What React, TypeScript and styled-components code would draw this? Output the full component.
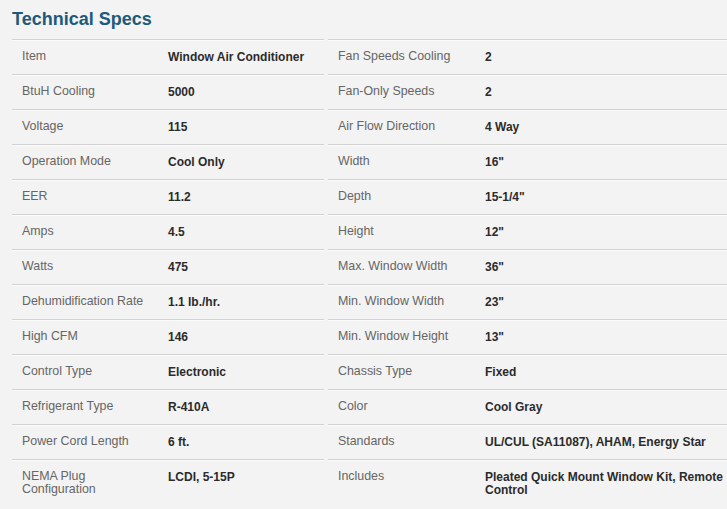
import React from "react";
import styled, { createGlobalStyle } from "styled-components";

const Global = createGlobalStyle`
  html, body { margin: 0; padding: 0; background: #f3f3f3; overflow: hidden; }
  body { font-family: "Liberation Sans", Arial, sans-serif; }
  *, *::before, *::after { box-sizing: border-box; }
`;

const Page = styled.div`
  padding: 8px 0 0 12px;
  width: 760px;
`;

const Title = styled.h2`
  margin: 0 0 9px 0;
  font-size: 18px;
  line-height: 22px;
  font-weight: bold;
  color: #1d5a7b;
`;

const Columns = styled.div`
  display: flex;
  gap: 4px;
`;

const Table = styled.div<{ $w: number }>`
  width: ${(p) => p.$w}px;
  flex: none;
`;

const Row = styled.div`
  display: flex;
  border-top: 1px solid #d2d2d2;
  box-shadow: inset 0 1px 0 #fbfbfb;
  font-size: 12px;
  line-height: 13px;
`;

const Label = styled.div<{ $w: number }>`
  width: ${(p) => p.$w}px;
  flex: none;
  padding: 10px 8px 11px 10px;
  font-size: 12.4px;
  color: #666666;
`;

const Value = styled.div`
  flex: 1;
  padding: 11px 4px 10px 10px;
  color: #2b2b2b;
  font-weight: bold;
`;

type Spec = [string, string];

const left: Spec[] = [
  ["Item", "Window Air Conditioner"],
  ["BtuH Cooling", "5000"],
  ["Voltage", "115"],
  ["Operation Mode", "Cool Only"],
  ["EER", "11.2"],
  ["Amps", "4.5"],
  ["Watts", "475"],
  ["Dehumidification Rate", "1.1 lb./hr."],
  ["High CFM", "146"],
  ["Control Type", "Electronic"],
  ["Refrigerant Type", "R-410A"],
  ["Power Cord Length", "6 ft."],
  ["NEMA Plug Configuration", "LCDI, 5-15P"],
];

const right: Spec[] = [
  ["Fan Speeds Cooling", "2"],
  ["Fan-Only Speeds", "2"],
  ["Air Flow Direction", "4 Way"],
  ["Width", "16\""],
  ["Depth", "15-1/4\""],
  ["Height", "12\""],
  ["Max. Window Width", "36\""],
  ["Min. Window Width", "23\""],
  ["Min. Window Height", "13\""],
  ["Chassis Type", "Fixed"],
  ["Color", "Cool Gray"],
  ["Standards", "UL/CUL (SA11087), AHAM, Energy Star"],
  ["Includes", "Pleated Quick Mount Window Kit, Remote Control"],
];

const SpecTable = ({ rows, w, labelW }: { rows: Spec[]; w: number; labelW: number }) => (
  <Table $w={w}>
    {rows.map(([l, v]) => (
      <Row key={l}>
        <Label $w={labelW}>{l}</Label>
        <Value>{v}</Value>
      </Row>
    ))}
  </Table>
);

export default function App() {
  return (
    <Page>
      <Global />
      <Title>Technical Specs</Title>
      <Columns>
        <SpecTable rows={left} w={312} labelW={146} />
        <SpecTable rows={right} w={410} labelW={147} />
      </Columns>
    </Page>
  );
}
